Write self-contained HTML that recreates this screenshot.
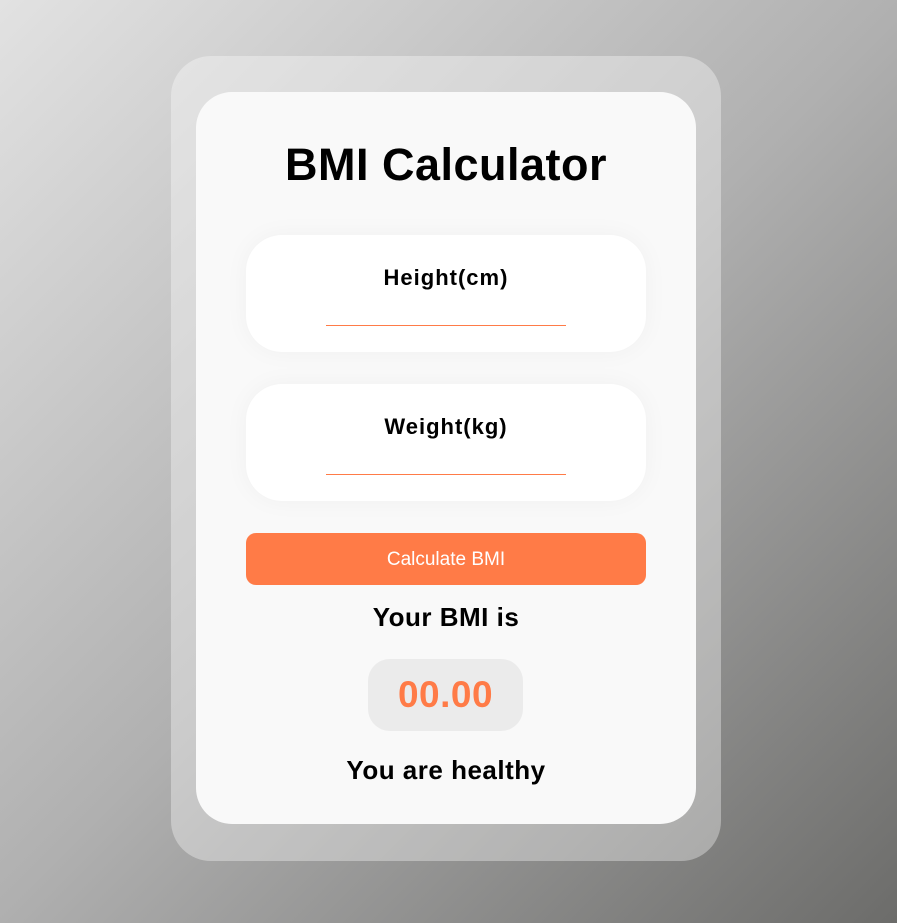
<!DOCTYPE html>
<html><head><style>
*{margin:0;padding:0;box-sizing:border-box}
html,body{width:897px;height:923px;overflow:hidden}
body{background:linear-gradient(135deg,#e2e2e2 0%,#b0b0b0 50%,#6c6c6a 100%);font-family:"Liberation Sans",sans-serif;position:relative}
.outer{position:absolute;left:171px;top:56px;width:550px;height:805px;border-radius:40px;background:rgba(255,255,255,0.35)}
.card{position:absolute;left:196px;top:92px;width:500px;height:732px;border-radius:36px;background:#f9f9f9}
.abs{position:absolute;left:0;width:100%;text-align:center;color:#000}
h1{position:absolute;left:0;width:100%;text-align:center;top:47px;font-size:45px;font-weight:bold;letter-spacing:0.5px}
.box{position:absolute;left:50px;width:400px;height:117px;border-radius:36px;background:#fff;box-shadow:0 0 25px rgba(0,0,0,0.04)}
.box .lbl{position:absolute;left:0;width:100%;text-align:center;top:30px;font-size:22px;font-weight:bold;letter-spacing:1px}
.box .line{position:absolute;left:80px;width:240px;top:90px;height:1px;background:#ff7b47}
.btn{position:absolute;left:50px;top:441px;width:400px;height:52px;border-radius:10px;background:#ff7b47;color:#fff;font-size:19px;text-align:center;line-height:53px}
.res{position:absolute;left:172px;top:567px;width:155px;height:72px;border-radius:22px;background:#ebebeb;color:#ff7b47;font-size:37px;font-weight:bold;text-align:center;line-height:72px;letter-spacing:0.5px}
</style></head><body>
<div class="outer"></div>
<div class="card">
<h1>BMI Calculator</h1>
<div class="box" style="top:143px"><div class="lbl">Height(cm)</div><div class="line"></div></div>
<div class="box" style="top:292px"><div class="lbl">Weight(kg)</div><div class="line"></div></div>
<div class="btn">Calculate BMI</div>
<div class="abs" style="top:510px;font-size:26px;font-weight:bold;letter-spacing:0.5px">Your BMI is</div>
<div class="res">00.00</div>
<div class="abs" style="top:663px;font-size:26px;font-weight:bold;letter-spacing:0.5px">You are healthy</div>
</div>
</body></html>
